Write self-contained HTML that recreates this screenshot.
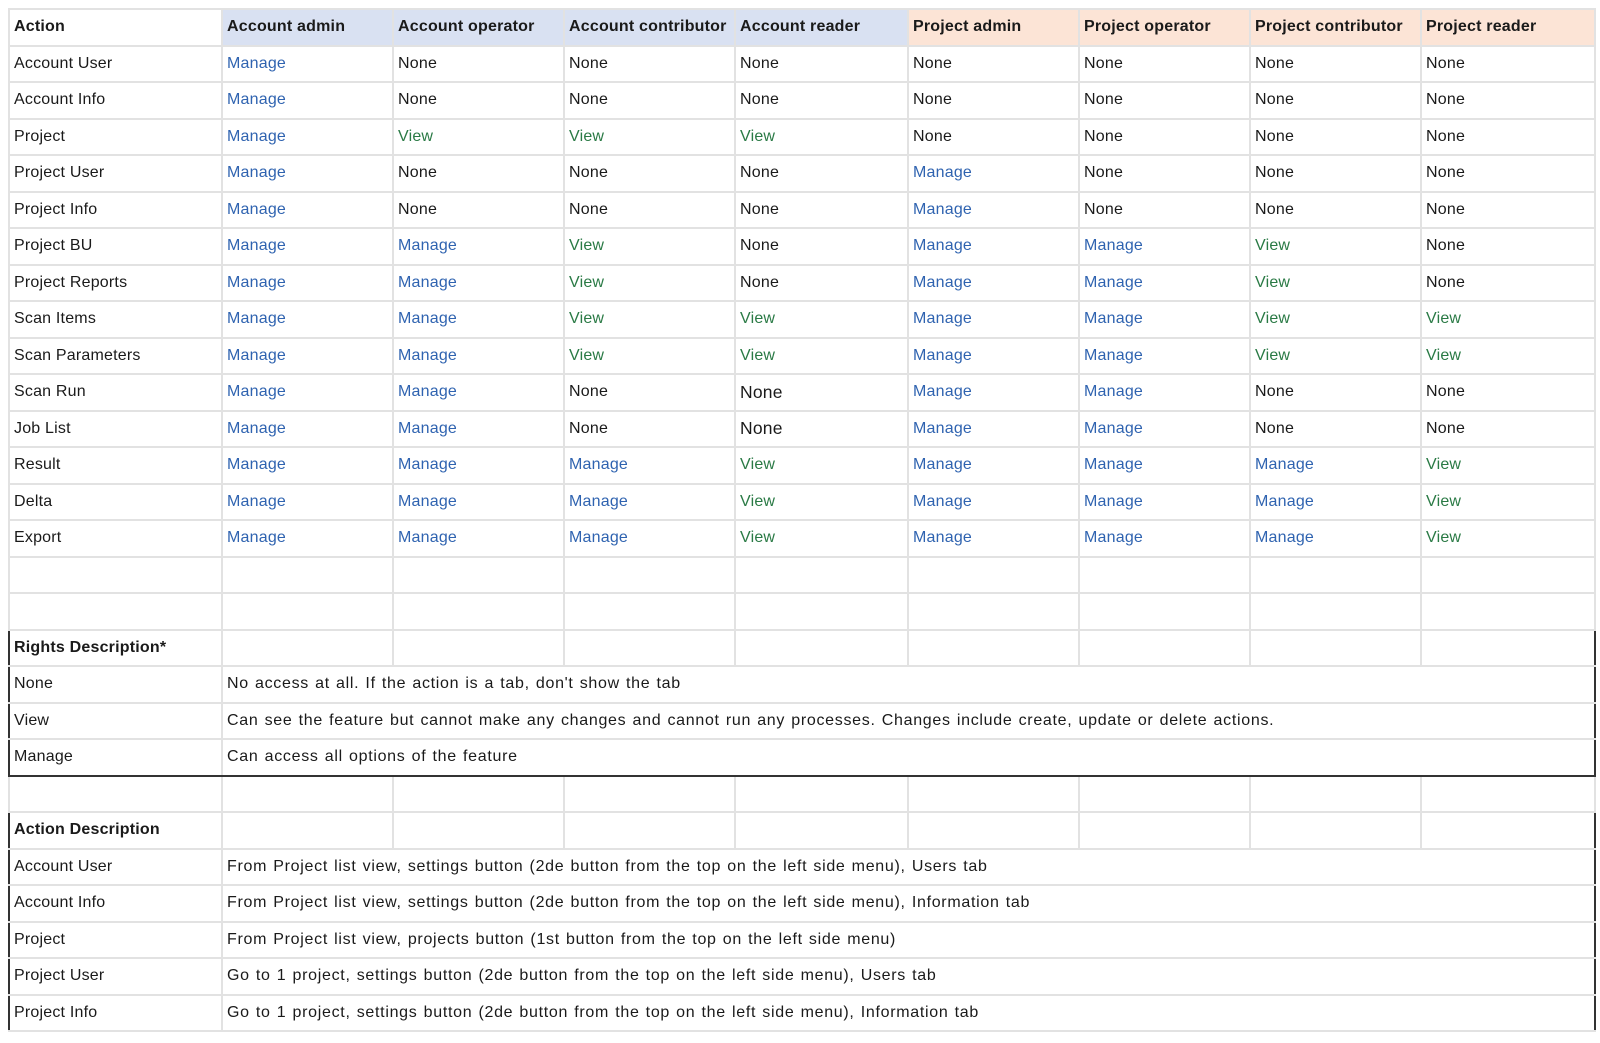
<!DOCTYPE html>
<html><head><meta charset="utf-8"><style>
html,body{margin:0;padding:0;background:#fff;width:1600px;height:1043px;overflow:hidden}
table{position:absolute;left:8px;top:8px;width:1586px;border-collapse:collapse;table-layout:fixed;font-family:"Liberation Sans",sans-serif;font-size:16px;letter-spacing:0.2px;color:#1a1a1a}
tr{height:36.5px}
td,th{border:2px solid #e2e2e2;padding:0 0 0 4px;white-space:nowrap;overflow:hidden;box-sizing:border-box}
th{text-align:left;font-weight:bold}
.b{background:#d9e1f2}.o{background:#fce4d6}
.m{color:#2f63b0}.v{color:#2a7a45}
.d{letter-spacing:0.7px;word-spacing:1px}
tr.top td,tr.top th{border-top:2px solid #333}
tr.bot td{border-bottom:2px solid #333}
td.l{border-left:2px solid #333}td.r{border-right:2px solid #333}
</style></head><body>
<table>
<colgroup><col style="width:213px"><col style="width:171px"><col style="width:171px"><col style="width:171px"><col style="width:173px"><col style="width:171px"><col style="width:171px"><col style="width:171px"><col style="width:174px"></colgroup>
<tr><th>Action</th><th class="b">Account admin</th><th class="b">Account operator</th><th class="b">Account contributor</th><th class="b">Account reader</th><th class="o">Project admin</th><th class="o">Project operator</th><th class="o">Project contributor</th><th class="o">Project reader</th></tr>
<tr><td>Account User</td><td class="m">Manage</td><td>None</td><td>None</td><td>None</td><td>None</td><td>None</td><td>None</td><td>None</td></tr>
<tr><td>Account Info</td><td class="m">Manage</td><td>None</td><td>None</td><td>None</td><td>None</td><td>None</td><td>None</td><td>None</td></tr>
<tr><td>Project</td><td class="m">Manage</td><td class="v">View</td><td class="v">View</td><td class="v">View</td><td>None</td><td>None</td><td>None</td><td>None</td></tr>
<tr><td>Project User</td><td class="m">Manage</td><td>None</td><td>None</td><td>None</td><td class="m">Manage</td><td>None</td><td>None</td><td>None</td></tr>
<tr><td>Project Info</td><td class="m">Manage</td><td>None</td><td>None</td><td>None</td><td class="m">Manage</td><td>None</td><td>None</td><td>None</td></tr>
<tr><td>Project BU</td><td class="m">Manage</td><td class="m">Manage</td><td class="v">View</td><td>None</td><td class="m">Manage</td><td class="m">Manage</td><td class="v">View</td><td>None</td></tr>
<tr><td>Project Reports</td><td class="m">Manage</td><td class="m">Manage</td><td class="v">View</td><td>None</td><td class="m">Manage</td><td class="m">Manage</td><td class="v">View</td><td>None</td></tr>
<tr><td>Scan Items</td><td class="m">Manage</td><td class="m">Manage</td><td class="v">View</td><td class="v">View</td><td class="m">Manage</td><td class="m">Manage</td><td class="v">View</td><td class="v">View</td></tr>
<tr><td>Scan Parameters</td><td class="m">Manage</td><td class="m">Manage</td><td class="v">View</td><td class="v">View</td><td class="m">Manage</td><td class="m">Manage</td><td class="v">View</td><td class="v">View</td></tr>
<tr><td>Scan Run</td><td class="m">Manage</td><td class="m">Manage</td><td>None</td><td style="font-size:17.5px">None</td><td class="m">Manage</td><td class="m">Manage</td><td>None</td><td>None</td></tr>
<tr><td>Job List</td><td class="m">Manage</td><td class="m">Manage</td><td>None</td><td style="font-size:17.5px">None</td><td class="m">Manage</td><td class="m">Manage</td><td>None</td><td>None</td></tr>
<tr><td>Result</td><td class="m">Manage</td><td class="m">Manage</td><td class="m">Manage</td><td class="v">View</td><td class="m">Manage</td><td class="m">Manage</td><td class="m">Manage</td><td class="v">View</td></tr>
<tr><td>Delta</td><td class="m">Manage</td><td class="m">Manage</td><td class="m">Manage</td><td class="v">View</td><td class="m">Manage</td><td class="m">Manage</td><td class="m">Manage</td><td class="v">View</td></tr>
<tr><td>Export</td><td class="m">Manage</td><td class="m">Manage</td><td class="m">Manage</td><td class="v">View</td><td class="m">Manage</td><td class="m">Manage</td><td class="m">Manage</td><td class="v">View</td></tr>
<tr><td></td><td></td><td></td><td></td><td></td><td></td><td></td><td></td><td></td></tr>
<tr><td></td><td></td><td></td><td></td><td></td><td></td><td></td><td></td><td></td></tr>
<tr class="top"><th style="border-left:2px solid #333">Rights Description*</th><td></td><td></td><td></td><td></td><td></td><td></td><td></td><td class="r"></td></tr>
<tr><td class="l">None</td><td colspan="8" class="r d">No access at all. If the action is a tab, don't show the tab</td></tr>
<tr><td class="l">View</td><td colspan="8" class="r d">Can see the feature but cannot make any changes and cannot run any processes. Changes include create, update or delete actions.</td></tr>
<tr class="bot"><td class="l">Manage</td><td colspan="8" class="r d">Can access all options of the feature</td></tr>
<tr><td></td><td></td><td></td><td></td><td></td><td></td><td></td><td></td><td></td></tr>
<tr class="top"><th style="border-left:2px solid #333">Action Description</th><td></td><td></td><td></td><td></td><td></td><td></td><td></td><td class="r"></td></tr>
<tr><td class="l">Account User</td><td colspan="8" class="r d">From Project list view, settings button (2de button from the top on the left side menu), Users tab</td></tr>
<tr><td class="l">Account Info</td><td colspan="8" class="r d">From Project list view, settings button (2de button from the top on the left side menu), Information tab</td></tr>
<tr><td class="l">Project</td><td colspan="8" class="r d">From Project list view, projects button (1st button from the top on the left side menu)</td></tr>
<tr><td class="l">Project User</td><td colspan="8" class="r d">Go to 1 project, settings button (2de button from the top on the left side menu), Users tab</td></tr>
<tr><td class="l">Project Info</td><td colspan="8" class="r d">Go to 1 project, settings button (2de button from the top on the left side menu), Information tab</td></tr>
</table>
</body></html>
